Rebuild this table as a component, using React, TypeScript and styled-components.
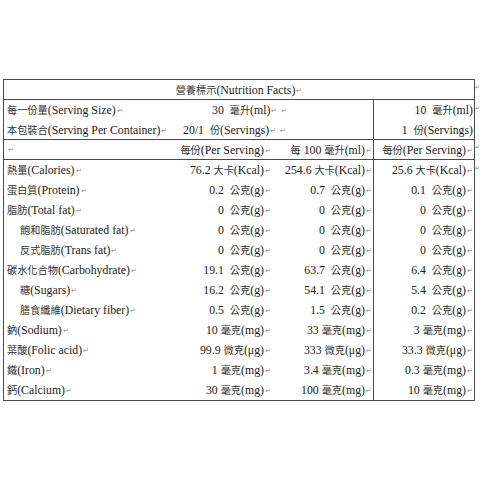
import React from "react";
import styled, { createGlobalStyle } from "styled-components";

const Global = createGlobalStyle`
  html, body { margin: 0; padding: 0; background: #fff; }
  body { font-family: "Liberation Serif", "Noto Sans CJK TC", serif; color: #222; }
`;

const Page = styled.div`
  padding: 79px 0 0 3px;
  width: 480px;
  height: 480px;
  box-sizing: border-box;
`;

const Table = styled.div`
  width: 472px;
  box-sizing: border-box;
  border: 1px solid #4a4a4a;
  font-size: 11.8px;
  line-height: 20px;
`;

const Title = styled.div`
  position: relative;
  height: 20px;
  box-sizing: border-box;
  border-bottom: 1px solid #4a4a4a;
  text-align: center;
  line-height: 19px;
  white-space: nowrap;
`;

const Row = styled.div<{ $line?: boolean }>`
  position: relative;
  display: grid;
  grid-template-columns: 176px 92px 101px 101px;
  height: 20px;
  box-sizing: border-box;
  border-bottom: ${(p) => (p.$line ? "1px solid #4a4a4a" : "none")};
  line-height: ${(p) => (p.$line ? "19px" : "20px")};
`;

const Label = styled.div<{ $indent?: boolean }>`
  padding-left: ${(p) => (p.$indent ? "16px" : "3px")};
  white-space: nowrap;
  overflow: hidden;
`;

const Value = styled.div`
  text-align: right;
  padding-right: 1px;
  white-space: pre;
`;

const Span = styled.div<{ $pad: number }>`
  grid-column: 2 / 4;
  padding-left: ${(p) => p.$pad}px;
  white-space: pre;
`;

const Last = styled.div`
  border-left: 1px solid #4a4a4a;
  text-align: right;
  padding-right: 1px;
  white-space: pre;
  overflow: hidden;
`;

const Cjk = styled.span`
  font-family: "Noto Sans CJK TC", sans-serif;
  font-size: 10.2px;
  color: #333;
`;

const Mark = styled.span`
  font-size: 7px;
  color: #8a8a8a;
  margin-left: 1px;
  vertical-align: 1px;
`;

const Outer = styled.span`
  position: absolute;
  right: -6px;
  top: -2px;
  font-size: 6px;
  color: #8a8a8a;
`;

const M = () => <Mark>↵</Mark>;

const T = ({ s }: { s: string }) => {
  const parts = s.split(/([\u3000-\u9fff\uff00-\uffef]+)/);
  return (
    <>
      {parts.map((p, i) =>
        i % 2 === 1 ? <Cjk key={i}>{p}</Cjk> : <React.Fragment key={i}>{p}</React.Fragment>
      )}
    </>
  );
};

type Item = {
  label: string;
  indent?: boolean;
  a: string;
  b: string;
  c: string;
  end?: boolean;
};

const rows: Item[] = [
  { label: "熱量(Calories)", a: "76.2 大卡(Kcal)", b: "254.6 大卡(Kcal)", c: "25.6 大卡(Kcal)", end: true },
  { label: "蛋白質(Protein)", a: "0.2  公克(g)", b: "0.7  公克(g)", c: "0.1  公克(g)" },
  { label: "脂肪(Total fat)", a: "0  公克(g)", b: "0  公克(g)", c: "0  公克(g)" },
  { label: "飽和脂肪(Saturated fat)", indent: true, a: "0  公克(g)", b: "0  公克(g)", c: "0  公克(g)" },
  { label: "反式脂肪(Trans fat)", indent: true, a: "0  公克(g)", b: "0  公克(g)", c: "0  公克(g)" },
  { label: "碳水化合物(Carbohydrate)", a: "19.1  公克(g)", b: "63.7  公克(g)", c: "6.4  公克(g)" },
  { label: "糖(Sugars)", indent: true, a: "16.2  公克(g)", b: "54.1  公克(g)", c: "5.4  公克(g)" },
  { label: "膳食纖維(Dietary fiber)", indent: true, a: "0.5  公克(g)", b: "1.5  公克(g)", c: "0.2  公克(g)" },
  { label: "鈉(Sodium)", a: "10 毫克(mg)", b: "33 毫克(mg)", c: "3 毫克(mg)" },
  { label: "葉酸(Folic acid)", a: "99.9 微克(μg)", b: "333 微克(μg)", c: "33.3 微克(μg)" },
  { label: "鐵(Iron)", a: "1 毫克(mg)", b: "3.4 毫克(mg)", c: "0.3 毫克(mg)" },
  { label: "鈣(Calcium)", a: "30 毫克(mg)", b: "100 毫克(mg)", c: "10 毫克(mg)" },
];

export default function App() {
  return (
    <Page>
      <Global />
      <Table>
        <Title>
          <T s="營養標示(Nutrition Facts)" /><M />
          <Outer>↵</Outer>
        </Title>
        <Row>
          <Label><T s="每一份量(Serving Size)" /><M /></Label>
          <Span $pad={32}>
            <T s="30  毫升(ml)" /><M /> <M />
          </Span>
          <Last>
            <T s="10  毫升(ml)" />
          </Last>
          <Outer>↵</Outer>
        </Row>
        <Row $line>
          <Label><T s="本包裝合(Serving Per Container)" /><M /></Label>
          <Span $pad={3}>
            <T s="20/1  份(Servings)" /><M /> <M />
          </Span>
          <Last>
            <T s="1  份(Servings)" />
          </Last>
        </Row>
        <Row $line>
          <Label><M /></Label>
          <Value><T s="每份(Per Serving)" /><M /></Value>
          <Value><T s="每 100 毫升(ml)" /><M /></Value>
          <Last><T s="每份(Per Serving)" /><M /></Last>
          <Outer>↵</Outer>
        </Row>
        {rows.map((r) => (
          <Row key={r.label}>
            <Label $indent={r.indent}><T s={r.label} /><M /></Label>
            <Value><T s={r.a} /><M /></Value>
            <Value><T s={r.b} /><M /></Value>
            <Last><T s={r.c} /><M /></Last>
            {r.end && <Outer>↵</Outer>}
          </Row>
        ))}
      </Table>
    </Page>
  );
}
